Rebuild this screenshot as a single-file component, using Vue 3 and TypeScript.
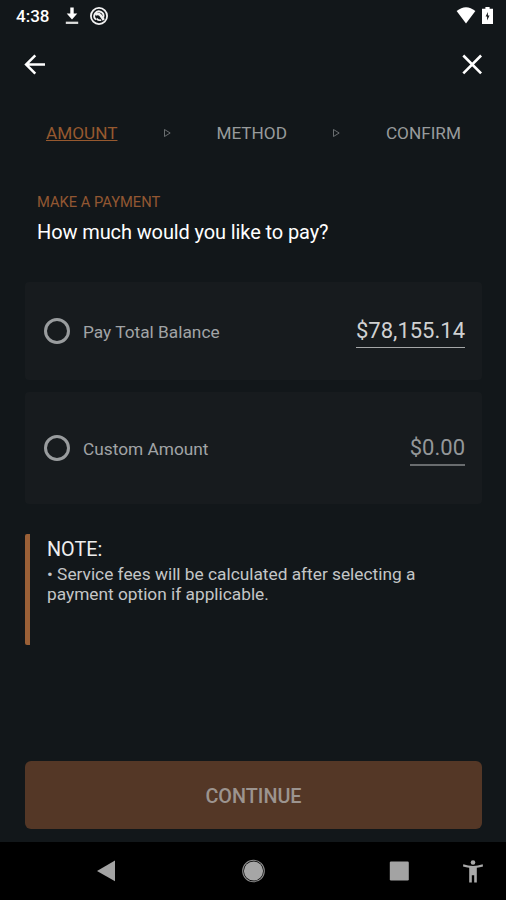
<script setup lang="ts">
import { ref } from 'vue'

interface PayOption {
  id: string
  label: string
  amount: string
}

const steps: string[] = ['Amount', 'Method', 'Confirm']
const activeStep = ref(0)
const selected = ref<string | null>(null)
const options: PayOption[] = [
  { id: 'total', label: 'Pay Total Balance', amount: '$78,155.14' },
  { id: 'custom', label: 'Custom Amount', amount: '$0.00' },
]
</script>

<template>
  <div class="screen">
    <div class="status">
      <span class="clock">4:38</span>
      <svg class="download" width="14" height="18" viewBox="0 0 14 18">
        <path d="M5.3.5h3.4v6h3.6L7 12.500 1.700 6.500h3.600z" fill="#fff" />
        <path d="M.8 15.8h12.4" stroke="#ddd" stroke-width="2.3" />
      </svg>
      <svg class="badge" width="20" height="20" viewBox="0 0 20 20" fill="none" stroke="#f2f2f2">
        <circle cx="10" cy="10" r="8.1" stroke-width="1.8" />
        <path d="M7 13.6A4.6 4.6 0 1 1 14.2 11.6" stroke-width="1.8" />
        <path d="M6.3 8.6q3.400-1.600 5.200.7l3.300 4.700" stroke-width="2.6" />
        <path d="M7.6 12.6q2 2.200 4.600 1.400" stroke-width="1.6" />
      </svg>
      <svg class="wifi" width="20" height="17" viewBox="0 0 20 17">
        <path d="M.6 4.1Q10-3.5 19.4 4.1L10 16.4z" fill="#fff" />
      </svg>
      <svg class="battery" width="11" height="17" viewBox="0 0 11 17">
        <path d="M3.4 0h4.2v1.8H11V17H0V1.8h3.4z" fill="#fff" />
        <path d="M5.9 5 3.6 9.6h1.500v3.800l2.400-5H5.900z" fill="#14181b" />
      </svg>
    </div>

    <header class="toolbar">
      <button class="icon-button" aria-label="Back">
        <svg width="22" height="22" viewBox="0 0 22 22" fill="none" stroke="#fff" stroke-width="2.5">
          <path d="M21 11.5H3M11.3 2.3 2.1 11.5l9.200 9.200" />
        </svg>
      </button>
      <button class="icon-button" aria-label="Close">
        <svg width="22" height="22" viewBox="0 0 22 22" fill="none" stroke="#fff" stroke-width="2.6">
          <path d="m2.3 2.5 17.800 17.800M20.100 2.500 2.300 20.300" />
        </svg>
      </button>
    </header>

    <nav class="steps">
      <template v-for="(step, i) in steps" :key="step">
        <svg v-if="i > 0" class="chevron" width="8" height="9" viewBox="0 0 8 9">
          <path d="M1.5.5v7L7.2 4z" fill="none" stroke="#75787a" stroke-width=".9" />
        </svg>
        <span class="step" :class="{ active: i === activeStep }">{{ step }}</span>
      </template>
    </nav>

    <section class="heading">
      <p class="eyebrow">Make a payment</p>
      <h1 class="title">How much would you like to pay?</h1>
    </section>

    <main class="options">
      <div
        v-for="option in options"
        :key="option.id"
        class="option"
        :class="option.id"
        @click="selected = option.id"
      >
        <span class="radio" :class="{ checked: selected === option.id }"></span>
        <span class="label">{{ option.label }}</span>
        <span class="amount">{{ option.amount }}</span>
      </div>
    </main>

    <aside class="note">
      <h2 class="note-title">NOTE:</h2>
      <p class="note-text">• Service fees will be calculated after selecting a<br />payment option if applicable.</p>
    </aside>

    <button class="continue">CONTINUE</button>

    <footer class="navbar">
      <svg class="nav-back" width="18" height="22" viewBox="0 0 18 22">
        <path d="M18 .6v20.6L0 11z" fill="#a3a3a3" />
      </svg>
      <svg class="nav-home" width="24" height="24" viewBox="0 0 24 24">
        <circle cx="11.5" cy="12" r="10.8" fill="none" stroke="#8c8c8c" stroke-width="1.1" />
        <circle cx="11.5" cy="12" r="9.6" fill="#a6a6a6" />
      </svg>
      <svg class="nav-recent" width="20" height="20" viewBox="0 0 20 20">
        <rect x=".8" y=".5" width="19" height="19" rx="1.2" fill="#a3a3a3" />
      </svg>
      <svg class="nav-access" width="20" height="23" viewBox="0 0 20 23" fill="#aaa">
        <circle cx="10" cy="2.5" r="2.3" />
        <path d="M.3 4.3Q10 7.6 19.7 4.3l.3 2.1q-3 1-6.200 1.400V22.500h-2.600v-7.200H8.800v7.200H6.200V7.800Q3 7.400 0 6.400z" />
      </svg>
    </footer>
  </div>
</template>

<style>
body {
  margin: 0;
  background: #12171a;
}
</style>

<style scoped>
.screen {
  box-sizing: border-box;
  width: 506px;
  height: 900px;
  display: flex;
  flex-direction: column;
  overflow: hidden;
  background: #12171a;
  color: #fff;
  font-family: Roboto, 'Liberation Sans', sans-serif;
}

.screen p,
.screen h1,
.screen h2 {
  margin: 0;
  font-weight: 400;
}

.screen button {
  border: 0;
  padding: 0;
  font-family: inherit;
}

.screen svg {
  display: block;
  flex: none;
}

.status {
  height: 32px;
  flex: none;
  display: flex;
  align-items: center;
  padding: 0 13px 0 16px;
  box-sizing: border-box;
}

.clock {
  width: 49px;
  font-size: 17px;
  font-weight: 500;
  line-height: 32px;
}

.download {
  margin-top: -1px;
}

.badge {
  margin-left: 10px;
  margin-top: -1px;
}

.wifi {
  margin-left: auto;
  margin-top: -2px;
}

.battery {
  margin-left: 6px;
  margin-top: -1px;
}

.toolbar {
  height: 64px;
  flex: none;
  display: flex;
  align-items: center;
  justify-content: space-between;
  padding: 0 23px 0 24px;
}

.icon-button {
  background: none;
}

.steps {
  height: 24px;
  flex: none;
  margin-top: 25px;
  padding: 0 45px 0 46px;
  display: flex;
  align-items: center;
  justify-content: space-between;
}

.step {
  font-size: 17.2px;
  line-height: 24px;
  text-transform: uppercase;
  color: #989b9c;
}

.step.active {
  color: #96592f;
  text-decoration: underline;
}

.heading {
  flex: none;
  height: 89px;
  margin-top: 47px;
  padding-left: 37px;
}

.eyebrow {
  height: 28px;
  line-height: 20px;
  font-size: 14.7px;
  text-transform: uppercase;
  color: #925732;
}

.title {
  font-size: 20px;
  line-height: 24px;
  letter-spacing: -0.11px;
}

.options {
  flex: none;
  margin: 0 24px 0 25px;
  display: flex;
  flex-direction: column;
  gap: 12px;
}

.option {
  box-sizing: border-box;
  display: flex;
  align-items: center;
  padding: 0 17px 0 19px;
  background: #171b1e;
  border-radius: 4px;
}

.option.total {
  height: 98px;
  margin-top: 1px;
}

.option.custom {
  height: 112px;
}

.radio {
  box-sizing: border-box;
  width: 26px;
  height: 26px;
  border: 3px solid #999c9e;
  border-radius: 50%;
}

.radio.checked {
  background: radial-gradient(circle, #a86436 0 6px, transparent 7px);
}

.label {
  margin-left: 13px;
  padding-top: 1px;
  font-size: 17.3px;
  color: #a1a4a6;
}

.amount {
  margin-left: auto;
  margin-top: 3px;
  padding-bottom: 2px;
  border-bottom: 1px solid #a5a7a8;
  font-size: 22px;
  line-height: 28px;
  color: #d0d1d2;
}

.custom .amount {
  border-bottom: 2px solid #696c6e;
  color: #949799;
}

.note {
  flex: none;
  box-sizing: border-box;
  height: 111px;
  margin: 30px 25px 0;
  padding: 4px 0 0 17px;
  border-left: 5px solid #9a6037;
  border-radius: 2px;
}

.screen .note-title {
  font-size: 19.8px;
  line-height: 24px;
  color: #eee;
}

.screen .note-text {
  margin-top: 2px;
  font-size: 17.3px;
  line-height: 20px;
  color: #c4c6c7;
}

.screen .continue {
  flex: none;
  height: 68px;
  margin: 116px 24px 0 25px;
  padding-top: 2px;
  border-radius: 6px;
  background: #543726;
  color: #9c948f;
  font-size: 19.8px;
  font-weight: 500;
}

.navbar {
  flex: none;
  height: 58px;
  margin-top: 13px;
  display: flex;
  align-items: center;
  background: #000;
}

.nav-back {
  margin-left: 97px;
}

.nav-home {
  margin-left: 127px;
}

.nav-recent {
  margin-left: 123px;
}

.nav-access {
  margin-left: 54px;
}
</style>
